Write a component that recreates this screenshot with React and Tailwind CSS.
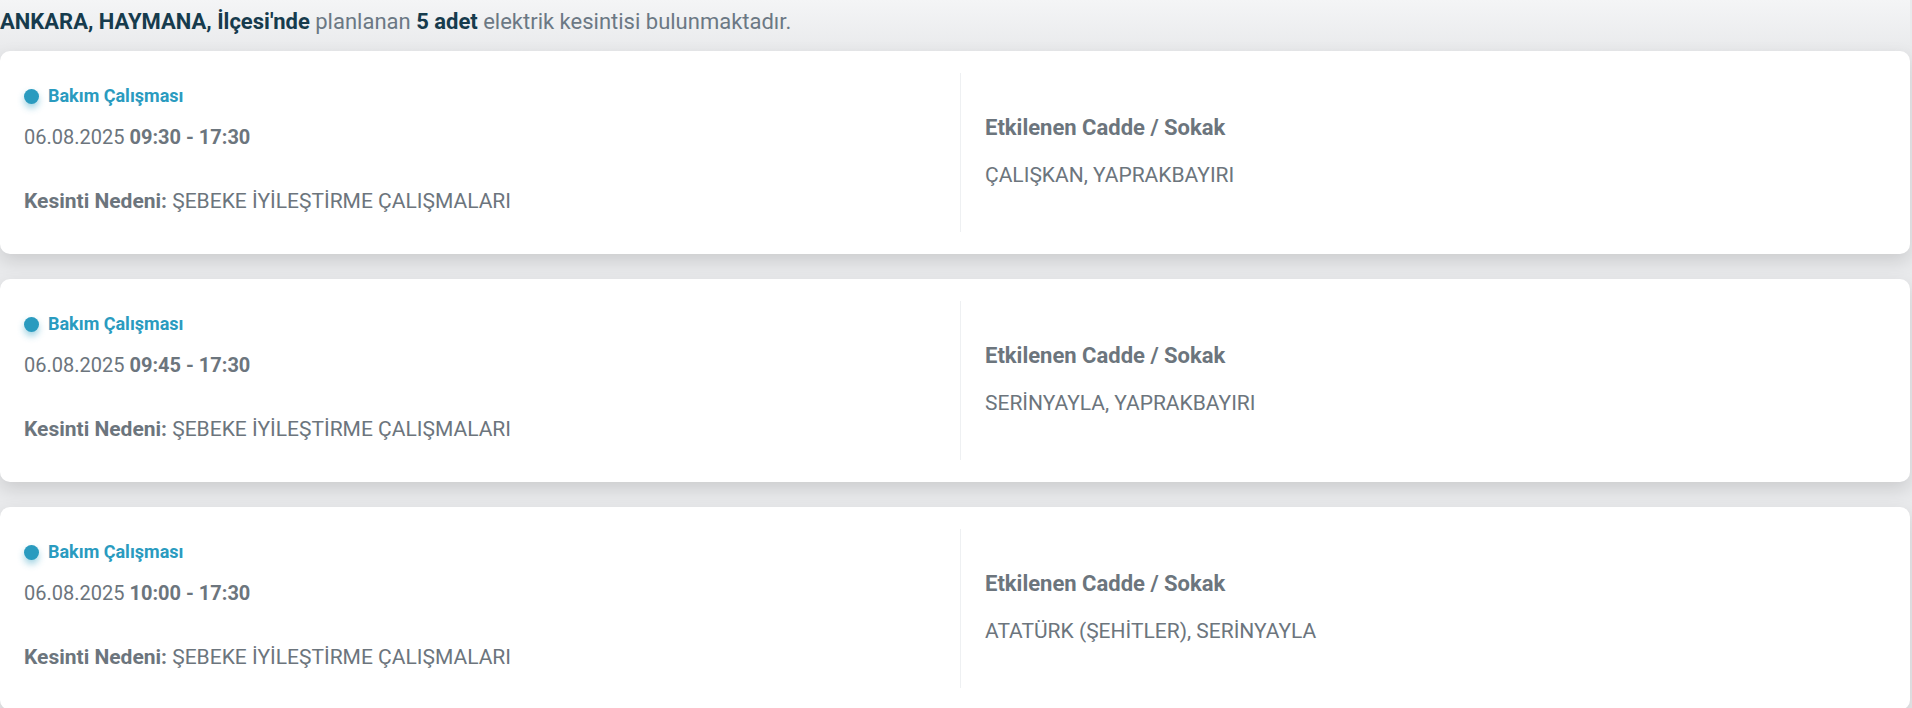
import React from "react";

const items = [
  { time: "09:30 - 17:30", streets: "ÇALIŞKAN, YAPRAKBAYIRI" },
  { time: "09:45 - 17:30", streets: "SERİNYAYLA, YAPRAKBAYIRI" },
  { time: "10:00 - 17:30", streets: "ATATÜRK (ŞEHİTLER), SERİNYAYLA" },
];

function Card({ time, streets }) {
  return (
    <div className="flex h-[203px] w-full rounded-[10px] bg-white shadow-[0_7px_18px_rgba(0,0,0,0.13)]">
      <div className="w-[960px] shrink-0 pl-6">
        <div className="mt-[33px] flex h-6 items-center">
          <span className="mr-[9px] h-[15px] w-[15px] rounded-full bg-[#2a9bbf] shadow-[0_4px_7px_rgba(42,155,191,0.45)]"></span>
          <span className="text-[18px] font-bold leading-6 text-[#2a9bbf]">Bakım Çalışması</span>
        </div>
        <div className="mt-[15px] text-[20px] leading-7 text-[#6c757d]">
          06.08.2025 <span className="font-bold">{time}</span>
        </div>
        <div className="mt-[36px] text-[21px] leading-7 text-[#6c757d]">
          <span className="font-bold">Kesinti Nedeni:</span> ŞEBEKE İYİLEŞTİRME ÇALIŞMALARI
        </div>
      </div>
      <div className="my-[22px] flex flex-1 flex-col border-l border-[#eef0f2] pl-6">
        <div className="mt-[41px] text-[22px] font-bold leading-7 text-[#6c757d]">Etkilenen Cadde / Sokak</div>
        <div className="mt-[19px] text-[21px] leading-7 text-[#6c757d]">{streets}</div>
      </div>
    </div>
  );
}

export default function App() {
  return (
    <div
      className="min-h-[708px] w-full overflow-hidden bg-[#e9eaec] pr-[2px]"
      style={{ fontFamily: "Roboto, 'Noto Sans', sans-serif" }}
    >
      <div className="h-[51px] bg-gradient-to-b from-[#f4f5f6] to-[#e9eaec] pt-[8px] text-[22px] leading-7">
        <span className="font-bold text-[#163b4d]">ANKARA, HAYMANA, İlçesi'nde</span>
        <span className="text-[#6b7884]"> planlanan </span>
        <span className="font-bold text-[#163b4d]">5 adet</span>
        <span className="text-[#6b7884]"> elektrik kesintisi bulunmaktadır.</span>
      </div>
      <div className="flex flex-col gap-[25px]">
        {items.map((it, i) => (
          <Card key={i} {...it} />
        ))}
      </div>
    </div>
  );
}
